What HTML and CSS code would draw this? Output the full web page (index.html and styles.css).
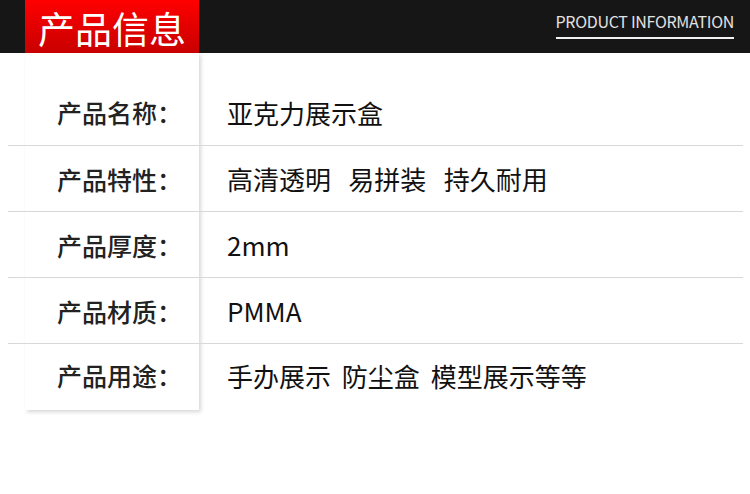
FILE: index.html
```html
<!DOCTYPE html>
<html lang="zh-CN">
<head>
<meta charset="utf-8">
<title>产品信息</title>
<link rel="stylesheet" href="styles.css">
</head>
<body>
<header class="topbar">
  <div class="tag">产品信息</div>
  <div class="en">PRODUCT INFORMATION</div>
</header>
<main class="info">
  <div class="panel"></div>
  <ul class="rows">
    <li class="row first"><span class="label">产品名称：</span><span class="value">亚克力展示盒</span></li>
    <li class="row"><span class="label">产品特性：</span><span class="value wide">高清透明 易拼装 持久耐用</span></li>
    <li class="row"><span class="label">产品厚度：</span><span class="value">2mm</span></li>
    <li class="row"><span class="label">产品材质：</span><span class="value">PMMA</span></li>
    <li class="row last"><span class="label">产品用途：</span><span class="value narrow">手办展示 防尘盒 模型展示等等</span></li>
  </ul>
</main>
</body>
</html>
```
FILE: styles.css
```css
* { box-sizing: border-box; }
html, body { margin: 0; padding: 0; background: #fff; }
body {
  width: 750px;
  height: 494px;
  overflow: hidden;
  font-family: "Noto Sans CJK SC", "Noto Sans", sans-serif;
  color: #111;
}
.topbar {
  height: 53px;
  background: #161616;
  display: flex;
  align-items: flex-start;
  justify-content: space-between;
  padding: 0 16px 0 25px;
}
.tag {
  width: 174px;
  height: 53px;
  background: linear-gradient(#ff0000, #c80000);
  color: #fff;
  font-size: 37px;
  line-height: 53px;
  text-align: center;
  padding-top: 2px;
}
.en {
  margin-top: 10px;
  color: #e2e2e2;
  font-size: 16px;
  letter-spacing: -0.3px;
  line-height: 22px;
  padding-bottom: 5px;
  border-bottom: 2px solid #f2f2f2;
}
.info {
  display: grid;
}
.panel, .rows { grid-area: 1 / 1; }
.panel {
  margin-left: 25px;
  width: 174px;
  height: 357px;
  background: #fff;
  box-shadow: 2px 2px 4px rgba(0, 0, 0, 0.16);
}
.rows {
  list-style: none;
  margin: 0 7px 0 8px;
  padding: 0;
  position: relative;
}
.row {
  display: flex;
  align-items: center;
  height: 66px;
  border-bottom: 1px solid #d8d8d8;
}
.row.first { height: 93px; padding-top: 26px; }
.row.last { border-bottom: none; padding-bottom: 4px; }
.label {
  width: 219px;
  padding-left: 49px;
  font-size: 25px;
  font-weight: 500;
  color: #222;
}
.value {
  font-size: 26px;
  color: #111;
}
.value.wide { word-spacing: 11.5px; }
.value.narrow { word-spacing: 5px; }
```
